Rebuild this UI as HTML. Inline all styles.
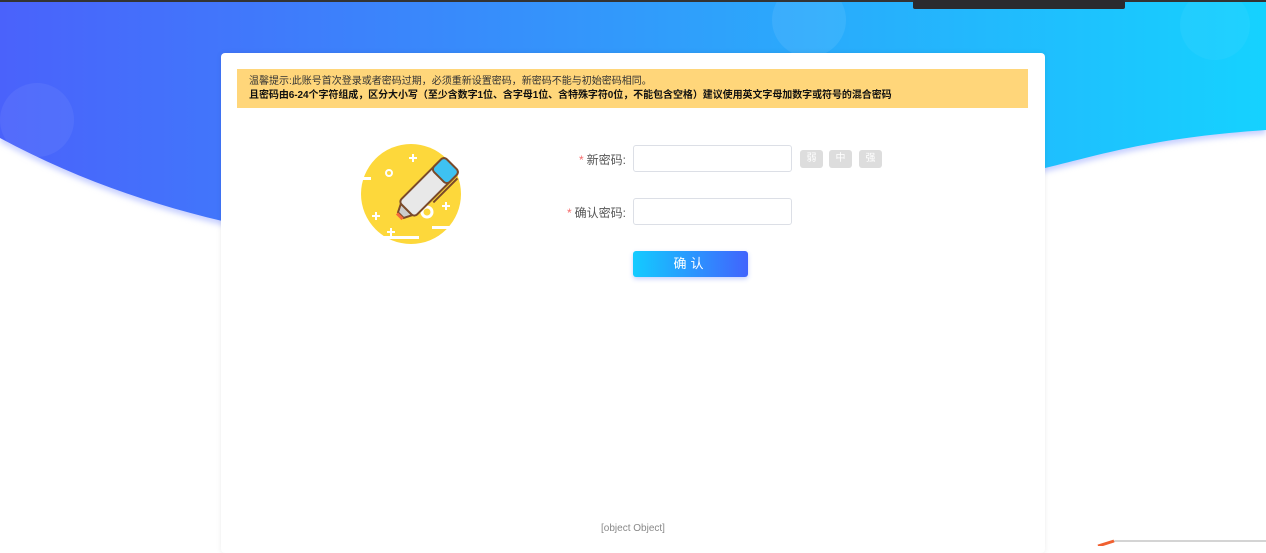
<!DOCTYPE html>
<html><head><meta charset="utf-8"><style>
*{margin:0;padding:0;box-sizing:border-box}
body{width:1266px;height:546px;overflow:hidden;background:#fff;position:relative;font-family:"Liberation Sans","Noto Sans CJK SC",sans-serif}
.card{position:absolute;left:221px;top:53px;width:824px;height:500px;background:#fff;border-radius:4px;box-shadow:0 0 6px rgba(0,0,0,.08)}
.notice{position:absolute;left:16px;top:16px;width:791px;height:39px;background:#ffd67a;font-size:10px;color:#333;padding:6px 12px;line-height:14px}
.notice b{color:#111;letter-spacing:-0.06px}
.lbl{position:absolute;font-size:12px;color:#555;text-align:right}
.lbl i{color:#f56c6c;font-style:normal;margin-right:3px}
.inp{position:absolute;left:412px;width:159px;height:27px;border:1px solid #dcdfe6;border-radius:3px;background:#fff}
.st{position:absolute;top:97px;width:23px;height:18px;background:#ddd;border-radius:3px;color:#fff;font-size:10px;text-align:center;line-height:18px}
.btn{position:absolute;left:412px;top:198px;width:115px;height:26px;border-radius:3px;background:linear-gradient(90deg,#13cbff,#4164fd);color:#fff;font-size:13px;text-align:center;line-height:26px;letter-spacing:4px;box-shadow:0 2px 5px rgba(60,100,250,.3)}
.foot{position:absolute;left:0;width:824px;top:470px;text-align:center;font-size:10px;color:#888}
</style></head><body>
<svg style="position:absolute;left:0;top:0" width="1266" height="546">
<defs><linearGradient id="g" x1="0" x2="1"><stop offset="0" stop-color="#4a62fb"/><stop offset="0.55" stop-color="#2fa0fb"/><stop offset="1" stop-color="#15d2ff"/></linearGradient>
<filter id="f"><feGaussianBlur stdDeviation="3"/></filter></defs>
<path d="M0 0H1266V130C1150 138 1100 155 1045 168C700 270 300 300 0 138Z" fill="#c8d0ff" filter="url(#f)" transform="translate(0,4)"/>
<path d="M0 0H1266V130C1150 138 1100 155 1045 168C700 270 300 300 0 138Z" fill="url(#g)"/>
<circle cx="37" cy="120" r="37" fill="#fff" opacity=".06"/>
<circle cx="809" cy="20" r="37" fill="#fff" opacity=".08"/>
<circle cx="1215" cy="25" r="35" fill="#fff" opacity=".04"/>
<rect x="0" y="0" width="1266" height="2" fill="#333"/>
<rect x="913" y="0" width="212" height="9" rx="2" fill="#2b2b2e"/>
<path d="M1100 546L1115 541H1266" stroke="#aaa" fill="none"/>
<path d="M1098 546L1114 541" stroke="#f06030" stroke-width="3"/>
</svg>
<div class="card">
<div class="notice">温馨提示:此账号首次登录或者密码过期，必须重新设置密码，新密码不能与初始密码相同。<br><b>且密码由6-24个字符组成，区分大小写（至少含数字1位、含字母1位、含特殊字符0位，不能包含空格）建议使用英文字母加数字或符号的混合密码</b></div>
<svg style="position:absolute;left:140px;top:91px" width="102" height="102" viewBox="0 0 102 102">
<circle cx="50" cy="50" r="50" fill="#fdd83b"/>
<rect x="20" y="92" width="38" height="3" fill="#fff"/><rect x="71" y="82" width="20" height="3" fill="#fff"/><rect x="0" y="33" width="10" height="3" fill="#fff"/>
<circle cx="28" cy="29" r="3" fill="none" stroke="#fff" stroke-width="2"/>
<circle cx="66" cy="68" r="5" fill="none" stroke="#fff" stroke-width="3"/>
<path d="M52 10v8M48 14h8M15 68v8M11 72h8M85 58v8M81 62h8M30 84v8M26 88h8" stroke="#fff" stroke-width="2"/>
<g transform="rotate(45 66 45)">
<rect x="55" y="10" width="22" height="64" rx="4" fill="#e8e8e8" stroke="#7a4a2a" stroke-width="2"/>
<rect x="55" y="10" width="22" height="18" rx="4" fill="#3ec2f2" stroke="#7a4a2a" stroke-width="2"/>
<path d="M58 74h16l-4 8h-8z" fill="#ccc" stroke="#7a4a2a" stroke-width="2"/>
<path d="M62 82h8v3h-8z" fill="#f46a3a"/>
<path d="M80 16v34" stroke="#7a4a2a" stroke-width="2"/>
</g></svg>
<div class="lbl" style="left:320px;top:98px;width:85px"><i>*</i>新密码:</div>
<div class="lbl" style="left:320px;top:151px;width:85px"><i>*</i>确认密码:</div>
<div class="inp" style="top:92px"></div>
<div class="inp" style="top:145px"></div>
<div class="st" style="left:579px">弱</div><div class="st" style="left:608px">中</div><div class="st" style="left:638px">强</div>
<div class="btn">确认</div>
<div class="foot">[object Object]</div>
</div>
</body></html>
